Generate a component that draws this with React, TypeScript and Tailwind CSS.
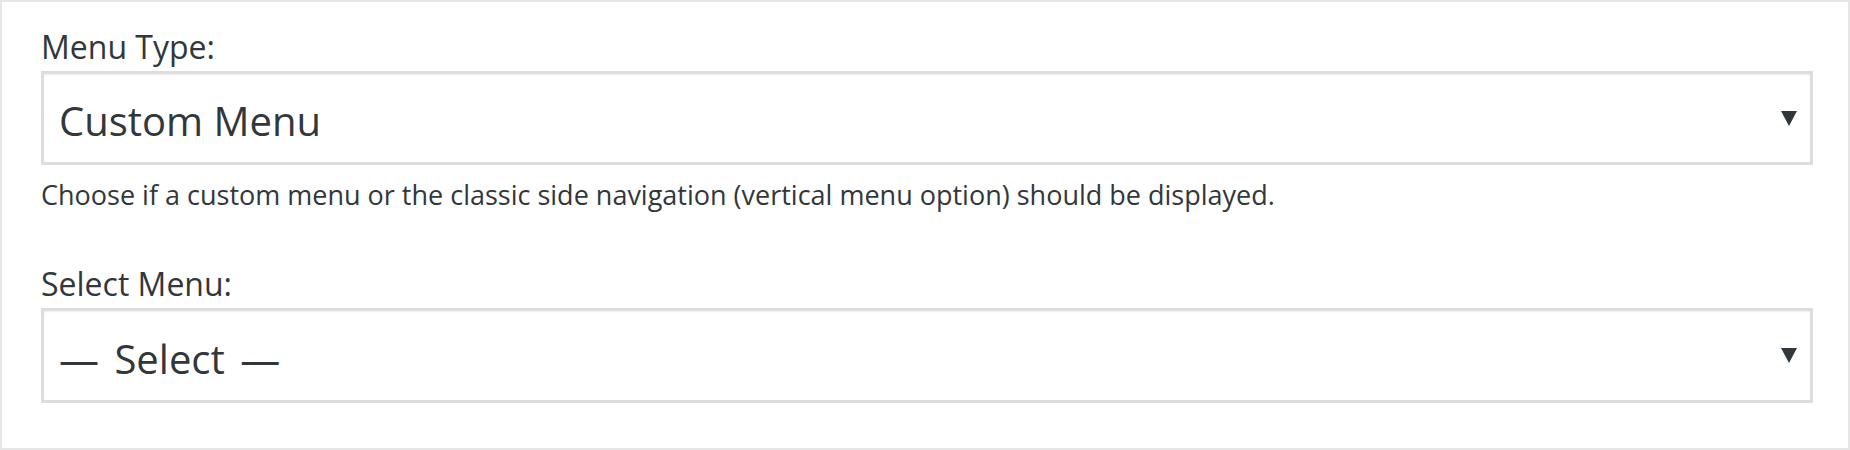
function Caret() {
  return (
    <svg width="16" height="15" viewBox="0 0 16 15" aria-hidden className="shrink-0">
      <path d="M0 0H16L8 15Z" fill="#32373c" />
    </svg>
  )
}

function SelectBox({
  value,
  className = '',
  textClass = '',
}: {
  value: string
  className?: string
  textClass?: string
}) {
  return (
    <div
      className={`flex items-center justify-between border-[3px] border-[#dddddd] bg-white pl-[15px] pr-[13px] shadow-[inset_0_1px_2px_rgba(0,0,0,0.07)] ${className}`}
    >
      <span className={`pt-[6px] text-[40px] leading-[48px] text-[#32373c] ${textClass}`}>{value}</span>
      <Caret />
    </div>
  )
}

export default function App() {
  return (
    <div
      className="flex h-[450px] w-[1850px] flex-col border-2 border-[#e6e6e6] bg-white pl-[39px] pr-[35px] pt-[23px] text-[#32373c]"
      style={{ fontFamily: '"Open Sans", "Noto Sans", sans-serif' }}
    >
      <label className="mb-[2px] block text-[32px] leading-[44px]">Menu Type:</label>
      <SelectBox value="Custom Menu" className="h-[94px]" />
      <p className="mt-[12px] text-[27px] leading-[36px]">
        Choose if a custom menu or the classic side navigation (vertical menu option) should be displayed.
      </p>

      <label className="mb-[2px] mt-[49px] block text-[32px] leading-[44px]">Select Menu:</label>
      <SelectBox value="— Select —" className="h-[95px]" textClass="[word-spacing:5px]" />
    </div>
  )
}
